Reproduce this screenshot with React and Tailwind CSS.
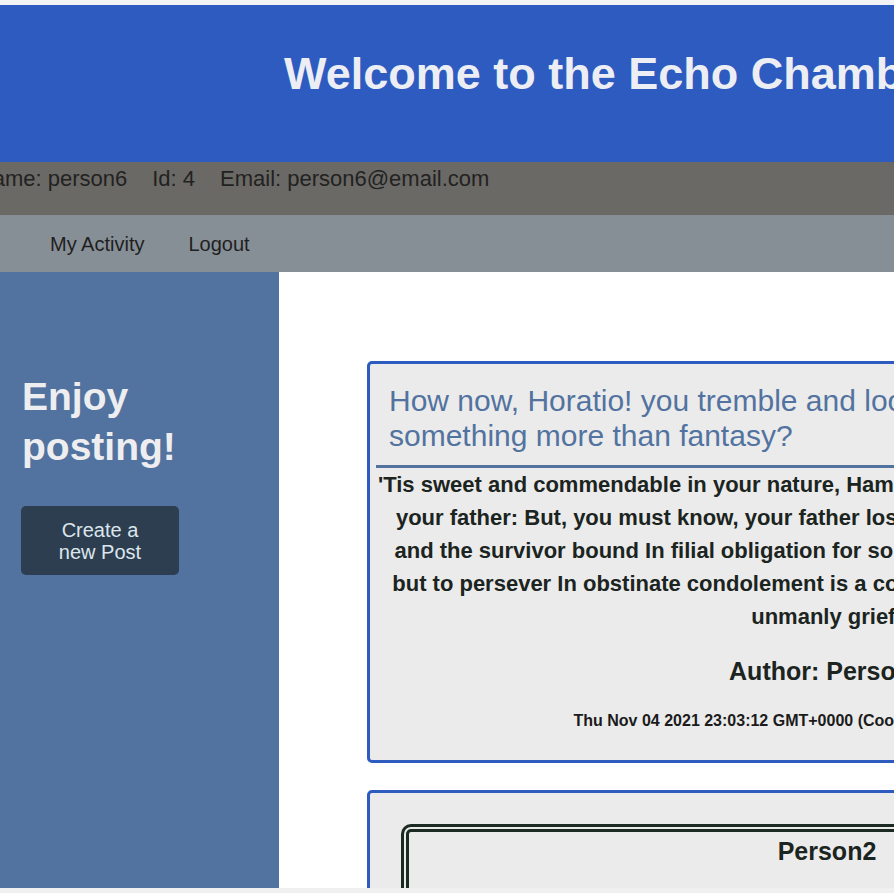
import React from "react";

export default function App() {
  return (
    <div className="h-[893px] w-[894px] overflow-hidden flex flex-col bg-[#f1f1f1] font-['Liberation_Sans',Arial,sans-serif]">
      <div className="h-[5px] shrink-0 bg-[#f3f3f5]" />

      <div className="flex-1 min-h-0 overflow-hidden flex flex-col bg-white">
        {/* header */}
        <header className="h-[157px] shrink-0 bg-[#2d5bc0] pl-[284px] pt-[46px]">
          <h1 className="text-[45px] leading-[45px] font-bold text-[#eceef4] whitespace-nowrap">
            Welcome to the Echo Chamber
          </h1>
        </header>

        {/* user info */}
        <div className="h-[53px] shrink-0 bg-[#6b6965] pt-[4px] text-[22px] leading-[26px] text-[#222] whitespace-nowrap flex gap-[25px] ml-[-66px]">
          <span>Username: person6</span>
          <span>Id: 4</span>
          <span>Email: person6@email.com</span>
        </div>

        {/* nav */}
        <nav className="h-[57px] shrink-0 bg-[#878f96] flex items-center pl-[50px] gap-[44px] text-[20px] leading-[24px] text-[#1f1f1f] whitespace-nowrap">
          <a>My Activity</a>
          <a>Logout</a>
        </nav>

        <div className="flex-1 min-h-0 flex">
          {/* sidebar */}
          <aside className="w-[279px] shrink-0 bg-[#5273a0] pt-[100px]">
            <h2 className="pl-[22px] text-[39px] leading-[50px] font-bold text-[#eeeef0]">
              Enjoy
              <br />
              posting!
            </h2>
            <button className="ml-[21px] mt-[34px] w-[158px] h-[69px] rounded-[5px] bg-[#2c3e50] text-[20px] leading-[22px] text-[#dde6ec] text-center">
              Create a
              <br />
              new Post
            </button>
          </aside>

          {/* posts */}
          <main className="flex-1 min-w-0 pl-[88px] pt-[89px]">
            <div className="w-[920px] border-[3px] border-[#2d5bc0] rounded-[5px] bg-[#ebebeb] px-[6px] pb-[30px]">
              <h3 className="pl-[13px] pt-[19px] text-[30px] leading-[35px] text-[#5273a0] whitespace-nowrap">
                How now, Horatio! you tremble and look pale: Is not this
                <br />
                something more than fantasy?
              </h3>
              <div className="mt-[12px] h-[3px] bg-[#5273a0]" />
              <p className="text-[22px] leading-[33px] font-bold text-center text-[#1b2420] whitespace-nowrap">
                'Tis sweet and commendable in your nature, Hamlet, To give these mourning duties to
                <br />
                your father: But, you must know, your father lost a father; That father lost, lost his,
                <br />
                and the survivor bound In filial obligation for some term To do obsequious sorrow:
                <br />
                but to persever In obstinate condolement is a course Of impious stubbornness; 'tis
                <br />
                unmanly grief;
              </p>
              <h4 className="mt-[24px] text-[25px] leading-[28px] font-bold text-center text-[#1b2420]">
                Author: Person2
              </h4>
              <p className="mt-[27px] text-[16px] leading-[18px] font-bold text-center text-[#1b1b1b]">
                Thu Nov 04 2021 23:03:12 GMT+0000 (Coordinated Universal Time)
              </p>
            </div>

            <div className="mt-[27px] w-[920px] border-[3px] border-[#2d5bc0] rounded-[5px] bg-[#ebebeb] p-[31px]">
              <div className="h-[200px] border-[8px] border-double border-[#1c2a24] rounded-[10px] pt-[5px]">
                <h4 className="text-[25px] leading-[28px] font-bold text-center text-[#1b2420]">
                  Person2
                </h4>
              </div>
            </div>
          </main>
        </div>
      </div>

      <div className="h-[5px] shrink-0 bg-[#f0f0f0]" />
    </div>
  );
}
